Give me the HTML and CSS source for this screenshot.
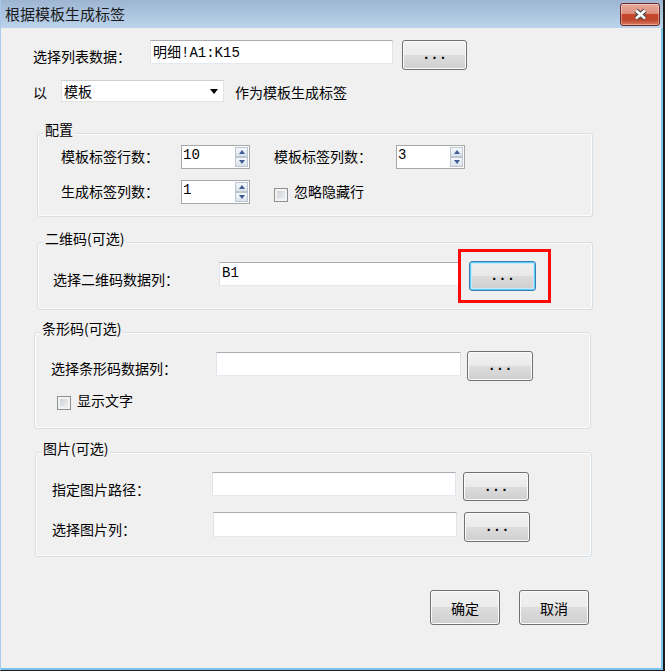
FILE: index.html
```html
<!DOCTYPE html>
<html lang="zh-CN">
<head>
<meta charset="utf-8">
<title>根据模板生成标签</title>
<link rel="stylesheet" href="styles.css">
</head>
<body>
<div class="window">
  <div class="titlebar">
    <span class="title">根据模板生成标签</span>
    <button class="close" aria-label="关闭">
      <svg width="15" height="13" viewBox="0 0 15 13">
        <path d="M3 2.5 L12 10.5 M12 2.5 L3 10.5" stroke="#474747" stroke-width="5" fill="none"/>
        <path d="M3 2.5 L12 10.5 M12 2.5 L3 10.5" stroke="#ffffff" stroke-width="2.6" fill="none"/>
      </svg>
    </button>
  </div>
  <div class="client">
    <div class="row r1">
      <span class="lbl w117">选择列表数据：</span>
      <input class="txt w243 mono" type="text" value="明细!A1:K15">
      <button class="btn dots ml9 w65 h30">...</button>
    </div>
    <div class="row r2">
      <span class="lbl w28 mt2">以</span>
      <div class="combo"><span>模板</span><span class="arrow"></span></div>
      <span class="lbl ml11 mt2">作为模板生成标签</span>
    </div>

    <div class="group g1">
      <div class="gt">配置</div>
      <div class="row ga">
        <span class="lbl w120 mt1">模板标签行数：</span>
        <div class="spin"><span class="spin-val">10</span><span class="spin-btns"><span class="sb up"></span><span class="sb down"></span></span></div>
        <span class="lbl ml24 w122 mt1">模板标签列数：</span>
        <div class="spin"><span class="spin-val">3</span><span class="spin-btns"><span class="sb up"></span><span class="sb down"></span></span></div>
      </div>
      <div class="row gb">
        <span class="lbl w120 mt1">生成标签列数：</span>
        <div class="spin"><span class="spin-val">1</span><span class="spin-btns"><span class="sb up"></span><span class="sb down"></span></span></div>
        <span class="check ml24 mt8"></span>
        <span class="lbl ml6 mt1">忽略隐藏行</span>
      </div>
    </div>

    <div class="group g2">
      <div class="gt">二维码(可选)</div>
      <div class="row q1">
        <span class="lbl w166 mt8">选择二维码数据列：</span>
        <input class="txt w240 mt1 mono" type="text" value="B1">
        <span class="mark ml10">
          <button class="btn dots focus w67 h30">...</button>
        </span>
      </div>
    </div>

    <div class="group g3">
      <div class="gt">条形码(可选)</div>
      <div class="row b1">
        <span class="lbl w165 mt7">选择条形码数据列：</span>
        <input class="txt w245 mt1" type="text" value="">
        <button class="btn dots ml6 w66 h30">...</button>
      </div>
      <div class="row b2">
        <span class="check mt6"></span>
        <span class="lbl ml6">显示文字</span>
      </div>
    </div>

    <div class="group g4">
      <div class="gt">图片(可选)</div>
      <div class="row p1">
        <span class="lbl w160 mt7">指定图片路径：</span>
        <input class="txt w244" type="text" value="">
        <button class="btn dots ml7 w66 h29">...</button>
      </div>
      <div class="row p2">
        <span class="lbl w161 mt7">选择图片列：</span>
        <input class="txt w244 h25" type="text" value="">
        <button class="btn dots ml7 w66 h30">...</button>
      </div>
    </div>

    <div class="actions">
      <button class="btn act">确定</button>
      <button class="btn act">取消</button>
    </div>
  </div>
</div>
</body>
</html>
```
FILE: styles.css
```css
html, body {
  margin: 0;
  padding: 0;
  background: #f0f0f0;
}
body {
  font-family: "Noto Sans CJK SC", "Noto Sans", sans-serif;
  font-size: 14px;
  color: #000;
}
.window {
  width: 665px;
  height: 671px;
  box-sizing: border-box;
  display: flex;
  flex-direction: column;
  border-left: 1px solid #a9c9ec;
  border-right: 2px solid #1b1b1b;
  border-bottom: 1px solid #1b1b1b;
  background: #f0f0f0;
}
.titlebar {
  flex: none;
  height: 28px;
  display: flex;
  align-items: flex-start;
  justify-content: space-between;
  padding-left: 4px;
  background: linear-gradient(#9db5d1, #bbd3ec);
}
.title {
  font-size: 15px;
  line-height: 20px;
  margin-top: 4px;
  color: #1a1a1a;
}
.close {
  width: 40px;
  height: 23px;
  margin: 3px 3px 0 0;
  padding: 0;
  box-sizing: border-box;
  border: 1px solid #6b2c2c;
  border-radius: 3px;
  background: linear-gradient(#e9aa9c 0%, #dc8f7e 45%, #c8472c 50%, #c0462c 75%, #d87b5f 100%);
  box-shadow: inset 0 0 0 1px rgba(255, 255, 255, 0.35);
  display: flex;
  align-items: center;
  justify-content: center;
}
.close svg { display: block; }
.client {
  flex: 1;
  border-right: 2px solid #7ac3ec;
  border-bottom: 2px solid #7ac3ec;
  background: #f0f0f0;
}

.row {
  display: flex;
  align-items: flex-start;
}
.lbl {
  flex: none;
  line-height: 20px;
  white-space: nowrap;
}
.mono { font-family: "Liberation Mono", "Noto Sans CJK SC", monospace; }

.txt {
  flex: none;
  height: 24px;
  box-sizing: border-box;
  margin: 0;
  padding: 0 2px 3px 2px;
  border: 1px solid #e2e3ea;
  border-top-color: #abadb3;
  border-bottom-color: #e3e9ef;
  background: #fff;
  font-size: 14px;
  color: #000;
  outline: none;
}
.btn {
  flex: none;
  margin: 0;
  padding: 0;
  box-sizing: border-box;
  border: 1px solid #707070;
  border-radius: 3px;
  background: linear-gradient(#f2f2f2 0%, #ebebeb 50%, #dddddd 50%, #cfcfcf 100%);
  box-shadow: inset 0 0 0 1px #fbfbfb;
  font-family: "Noto Sans CJK SC", sans-serif;
  font-size: 14px;
  color: #000;
}
.dots {
  font-family: "Liberation Mono", monospace;
  font-weight: bold;
  font-size: 14px;
  line-height: 20px;
}
.focus {
  border-color: #3c7fb1;
  background: linear-gradient(#eaf6fd 0%, #e6f1f9 50%, #d9e7f2 50%, #cbdce9 100%);
  background: linear-gradient(#f0f0f0 0%, #e9e9e9 50%, #dcdcdc 50%, #cdcdcd 100%);
  box-shadow: inset 0 0 0 1px #5cc8f6, inset 0 0 0 2px #c5ebfb;
}
.mark {
  position: relative;
  display: block;
  flex: none;
}
.mark .btn { display: block; }
.mark::after {
  content: "";
  position: absolute;
  left: -11px;
  top: -12px;
  right: -15px;
  bottom: -12px;
  border: 3px solid #ff0a0a;
  pointer-events: none;
}

.combo {
  flex: none;
  width: 163px;
  height: 22px;
  box-sizing: border-box;
  display: flex;
  align-items: center;
  justify-content: space-between;
  padding: 0 5px 0 2px;
  border: 1px solid #e3e3e3;
  border-top-color: #d0d0d0;
  background: #fff;
  line-height: 20px;
}
.arrow {
  width: 0;
  height: 0;
  border-left: 4px solid transparent;
  border-right: 4px solid transparent;
  border-top: 5px solid #000;
  margin-top: 1px;
}

.spin {
  flex: none;
  width: 69px;
  height: 24px;
  box-sizing: border-box;
  display: flex;
  justify-content: space-between;
  border: 1px solid #a8a8a8;
  background: #fff;
}
.spin-val {
  font-family: "Liberation Mono", monospace;
  font-size: 14px;
  line-height: 18px;
  padding-left: 1px;
}
.spin-btns {
  display: flex;
  flex-direction: column;
  padding: 1px 1px 0 0;
}
.sb {
  width: 13px;
  height: 10px;
  box-sizing: border-box;
  border: 1px solid #bcc5d2;
  background: linear-gradient(#f6f8fb, #dbe2ec);
  display: flex;
  align-items: center;
  justify-content: center;
}
.sb::before {
  content: "";
  width: 0;
  height: 0;
  border-left: 3px solid transparent;
  border-right: 3px solid transparent;
}
.up::before { border-bottom: 4px solid #3f5d96; }
.down::before { border-top: 4px solid #3f5d96; }

.check {
  flex: none;
  width: 14px;
  height: 14px;
  box-sizing: border-box;
  border: 1px solid #8e8f8f;
  background: linear-gradient(135deg, #c6cbd1, #f7f7f7);
  box-shadow: inset 0 0 0 2px #f3f3f3;
}

.group {
  box-sizing: border-box;
  border: 1px solid #d5dfe5;
  border-radius: 3px;
  box-shadow: inset 0 0 0 1px #fcfcfc;
}
.gt {
  width: fit-content;
  margin: -15px 0 0 5px;
  padding: 0 2px;
  line-height: 20px;
  background: #f0f0f0;
}

/* top rows */
.r1 { margin-top: 12px; padding-left: 32px; }
.r1 .lbl { margin-top: 6px; }
.r2 { margin-top: 10px; padding-left: 32px; }

/* group: 配置 */
.g1 { width: 556px; margin: 31px 0 0 36px; padding-bottom: 12px; }
.ga { margin-top: 6px; padding-left: 23px; }
.gb { margin-top: 11px; padding-left: 23px; }

/* group: 二维码 */
.g2 { width: 556px; margin: 25px 0 0 36px; padding-bottom: 18px; }
.q1 { margin-top: 13px; padding-left: 15px; }

/* group: 条形码 */
.g3 { width: 557px; margin: 22px 0 0 33px; padding-bottom: 18px; }
.b1 { margin-top: 13px; padding-left: 16px; }
.b2 { margin-top: 9px; padding-left: 22px; }

/* group: 图片 */
.g4 { width: 557px; margin: 23px 0 0 34px; padding-bottom: 14px; }
.p1 { margin-top: 14px; padding-left: 16px; }
.p2 { margin-top: 11px; padding-left: 16px; }

.actions {
  display: flex;
  gap: 19px;
  margin-top: 33px;
  padding-left: 429px;
}
.act { width: 70px; height: 35px; line-height: 20px; }

/* sizing helpers */
.w28 { width: 28px; }
.w65 { width: 65px; }
.w66 { width: 66px; }
.w67 { width: 67px; }
.w117 { width: 117px; }
.w120 { width: 120px; }
.w122 { width: 122px; }
.w160 { width: 160px; }
.w161 { width: 161px; }
.w165 { width: 165px; }
.w166 { width: 166px; }
.w240 { width: 240px; }
.w243 { width: 243px; }
.w244 { width: 244px; }
.w245 { width: 245px; }
.h25 { height: 25px; }
.h29 { height: 29px; }
.h30 { height: 30px; }
.ml6 { margin-left: 6px; }
.ml7 { margin-left: 7px; }
.ml9 { margin-left: 9px; }
.ml10 { margin-left: 10px; }
.ml11 { margin-left: 11px; }
.ml24 { margin-left: 24px; }
.mt1 { margin-top: 1px; }
.mt2 { margin-top: 2px; }
.mt6 { margin-top: 6px; }
.mt7 { margin-top: 7px; }
.mt8 { margin-top: 8px; }
```
